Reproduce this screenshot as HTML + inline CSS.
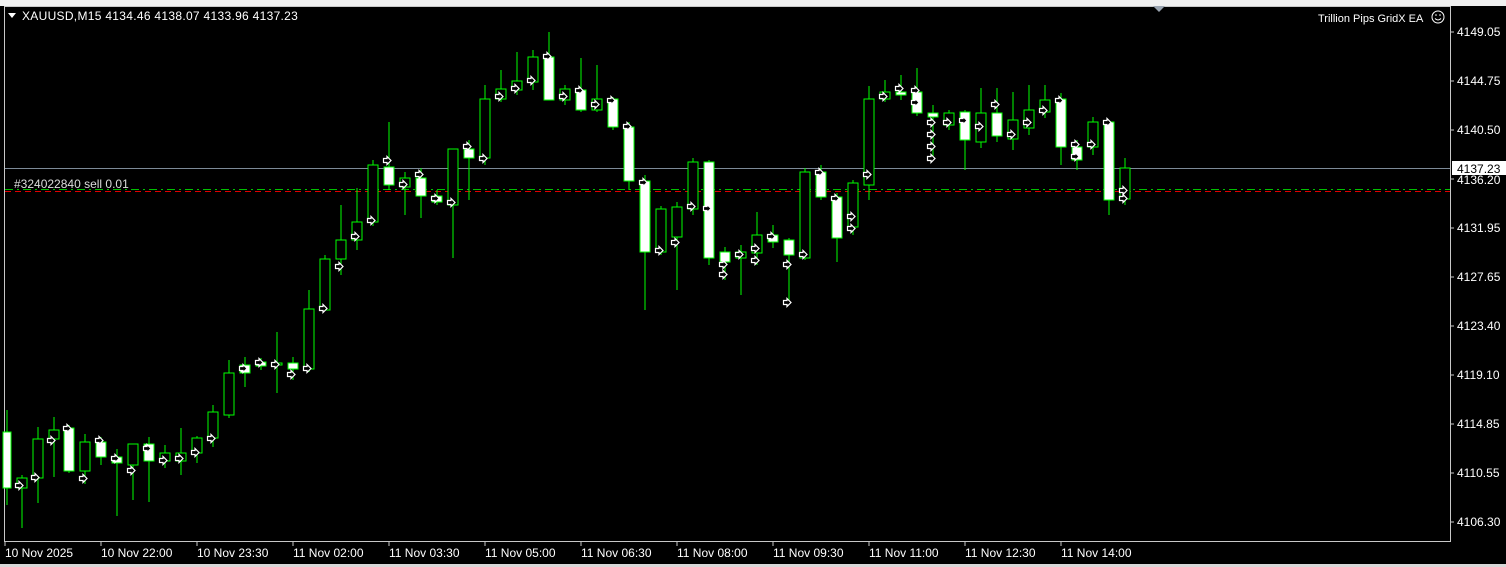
<!DOCTYPE html>
<html><head><meta charset="utf-8"><style>
html,body{margin:0;padding:0;background:#000;width:1506px;height:567px;overflow:hidden}
svg{display:block}
text{font-family:"Liberation Sans",sans-serif;font-size:12px}
</style></head><body>
<svg width="1506" height="567" xmlns="http://www.w3.org/2000/svg">
<defs>
<g id="ar"><path d="M0.5,2.5h3.5v-2l4,4-4,4v-2h-3.5z" fill="#000" stroke="#fff" stroke-width="1.2"/></g>
</defs>
<rect x="0" y="0" width="1506" height="6" fill="#f0f0f0"/>
<rect x="0" y="6" width="1506" height="561" fill="#000"/>
<rect x="4.5" y="6.5" width="1446" height="535" fill="none" stroke="#c8c8c8"/>
<polygon points="1153,6 1165,6 1159,12" fill="#9aa4b0"/>
<line x1="5" y1="168.5" x2="1450" y2="168.5" stroke="#7c8a98"/>
<line x1="5" y1="189.5" x2="1450" y2="189.5" stroke="#00c000" stroke-dasharray="8,4,2,4"/>
<line x1="5" y1="191.5" x2="1450" y2="191.5" stroke="#e00000" stroke-dasharray="6,4"/>
<g stroke="#00ff00" stroke-width="1" shape-rendering="crispEdges">
<line x1="7" y1="410" x2="7" y2="505"/><rect x="3" y="432" width="8" height="56" fill="#fff"/>
<line x1="22" y1="475" x2="22" y2="528"/><rect x="17" y="478" width="10" height="10" fill="#000"/>
<line x1="38" y1="427" x2="38" y2="503"/><rect x="33" y="439" width="10" height="39" fill="#000"/>
<line x1="54" y1="417" x2="54" y2="477"/><rect x="49" y="430" width="10" height="9" fill="#000"/>
<line x1="69" y1="425" x2="69" y2="473"/><rect x="64" y="428" width="10" height="43" fill="#fff"/>
<line x1="85" y1="434" x2="85" y2="484"/><rect x="80" y="442" width="10" height="29" fill="#000"/>
<line x1="101" y1="437" x2="101" y2="465"/><rect x="96" y="442" width="10" height="15" fill="#fff"/>
<line x1="117" y1="449" x2="117" y2="516"/><rect x="112" y="457" width="10" height="6" fill="#fff"/>
<line x1="133" y1="444" x2="133" y2="500"/><rect x="128" y="444" width="10" height="21" fill="#000"/>
<line x1="149" y1="437" x2="149" y2="502"/><rect x="144" y="444" width="10" height="17" fill="#fff"/>
<line x1="165" y1="445" x2="165" y2="468"/><rect x="160" y="453" width="10" height="8" fill="#000"/>
<line x1="181" y1="428" x2="181" y2="475"/><rect x="176" y="453" width="10" height="8" fill="#000"/>
<line x1="197" y1="436" x2="197" y2="463"/><rect x="192" y="438" width="10" height="15" fill="#000"/>
<line x1="213" y1="405" x2="213" y2="447"/><rect x="208" y="412" width="10" height="26" fill="#000"/>
<line x1="229" y1="360" x2="229" y2="418"/><rect x="224" y="373" width="10" height="42" fill="#000"/>
<line x1="245" y1="357" x2="245" y2="387"/><rect x="240" y="365" width="10" height="8" fill="#fff"/>
<line x1="261" y1="358" x2="261" y2="370"/><rect x="256" y="362" width="10" height="4" fill="#fff"/>
<line x1="277" y1="332" x2="277" y2="393"/><rect x="272" y="363" width="10" height="2" fill="#000"/>
<line x1="293" y1="357" x2="293" y2="380"/><rect x="288" y="363" width="10" height="6" fill="#fff"/>
<line x1="309" y1="290" x2="309" y2="372"/><rect x="304" y="309" width="10" height="60" fill="#000"/>
<line x1="325" y1="255" x2="325" y2="311"/><rect x="320" y="259" width="10" height="51" fill="#000"/>
<line x1="341" y1="205" x2="341" y2="275"/><rect x="336" y="240" width="10" height="19" fill="#000"/>
<line x1="357" y1="188" x2="357" y2="250"/><rect x="352" y="222" width="10" height="18" fill="#000"/>
<line x1="373" y1="160" x2="373" y2="226"/><rect x="368" y="165" width="10" height="57" fill="#000"/>
<line x1="389" y1="122" x2="389" y2="190"/><rect x="384" y="167" width="10" height="18" fill="#fff"/>
<line x1="405" y1="172" x2="405" y2="215"/><rect x="400" y="178" width="10" height="9" fill="#000"/>
<line x1="421" y1="168" x2="421" y2="218"/><rect x="416" y="178" width="10" height="18" fill="#fff"/>
<line x1="437" y1="190" x2="437" y2="205"/><rect x="432" y="196" width="10" height="6" fill="#fff"/>
<line x1="453" y1="149" x2="453" y2="258"/><rect x="448" y="149" width="10" height="56" fill="#000"/>
<line x1="469" y1="140" x2="469" y2="200"/><rect x="464" y="149" width="10" height="9" fill="#fff"/>
<line x1="485" y1="85" x2="485" y2="165"/><rect x="480" y="99" width="10" height="59" fill="#000"/>
<line x1="501" y1="70" x2="501" y2="102"/><rect x="496" y="89" width="10" height="10" fill="#000"/>
<line x1="517" y1="52" x2="517" y2="95"/><rect x="512" y="81" width="10" height="9" fill="#000"/>
<line x1="533" y1="50" x2="533" y2="90"/><rect x="528" y="57" width="10" height="25" fill="#000"/>
<line x1="549" y1="32" x2="549" y2="100"/><rect x="544" y="57" width="10" height="43" fill="#fff"/>
<line x1="565" y1="85" x2="565" y2="105"/><rect x="560" y="89" width="10" height="11" fill="#000"/>
<line x1="581" y1="58" x2="581" y2="112"/><rect x="576" y="90" width="10" height="20" fill="#fff"/>
<line x1="597" y1="65" x2="597" y2="112"/><rect x="592" y="99" width="10" height="11" fill="#000"/>
<line x1="613" y1="97" x2="613" y2="130"/><rect x="608" y="99" width="10" height="28" fill="#fff"/>
<line x1="629" y1="122" x2="629" y2="190"/><rect x="624" y="127" width="10" height="54" fill="#fff"/>
<line x1="645" y1="175" x2="645" y2="310"/><rect x="640" y="181" width="10" height="71" fill="#fff"/>
<line x1="661" y1="206" x2="661" y2="255"/><rect x="656" y="209" width="10" height="43" fill="#000"/>
<line x1="677" y1="202" x2="677" y2="290"/><rect x="672" y="207" width="10" height="30" fill="#000"/>
<line x1="693" y1="158" x2="693" y2="215"/><rect x="688" y="162" width="10" height="47" fill="#000"/>
<line x1="709" y1="160" x2="709" y2="265"/><rect x="704" y="162" width="10" height="96" fill="#fff"/>
<line x1="725" y1="247" x2="725" y2="280"/><rect x="720" y="252" width="10" height="10" fill="#fff"/>
<line x1="741" y1="245" x2="741" y2="295"/><rect x="736" y="252" width="10" height="6" fill="#000"/>
<line x1="757" y1="212" x2="757" y2="265"/><rect x="752" y="235" width="10" height="18" fill="#000"/>
<line x1="773" y1="225" x2="773" y2="248"/><rect x="768" y="235" width="10" height="7" fill="#fff"/>
<line x1="789" y1="238" x2="789" y2="300"/><rect x="784" y="240" width="10" height="15" fill="#fff"/>
<line x1="805" y1="168" x2="805" y2="260"/><rect x="800" y="172" width="10" height="86" fill="#000"/>
<line x1="821" y1="165" x2="821" y2="200"/><rect x="816" y="172" width="10" height="25" fill="#fff"/>
<line x1="837" y1="193" x2="837" y2="262"/><rect x="832" y="197" width="10" height="41" fill="#fff"/>
<line x1="853" y1="180" x2="853" y2="235"/><rect x="848" y="183" width="10" height="44" fill="#000"/>
<line x1="869" y1="86" x2="869" y2="200"/><rect x="864" y="99" width="10" height="86" fill="#000"/>
<line x1="885" y1="80" x2="885" y2="102"/><rect x="880" y="92" width="10" height="7" fill="#000"/>
<line x1="901" y1="75" x2="901" y2="100"/><rect x="896" y="92" width="10" height="3" fill="#fff"/>
<line x1="917" y1="68" x2="917" y2="116"/><rect x="912" y="92" width="10" height="21" fill="#fff"/>
<line x1="933" y1="105" x2="933" y2="160"/><rect x="928" y="113" width="10" height="4" fill="#fff"/>
<line x1="949" y1="110" x2="949" y2="130"/><rect x="944" y="113" width="10" height="12" fill="#000"/>
<line x1="965" y1="110" x2="965" y2="170"/><rect x="960" y="112" width="10" height="28" fill="#fff"/>
<line x1="981" y1="88" x2="981" y2="148"/><rect x="976" y="113" width="10" height="29" fill="#000"/>
<line x1="997" y1="88" x2="997" y2="142"/><rect x="992" y="113" width="10" height="23" fill="#fff"/>
<line x1="1013" y1="92" x2="1013" y2="150"/><rect x="1008" y="120" width="10" height="19" fill="#000"/>
<line x1="1029" y1="85" x2="1029" y2="135"/><rect x="1024" y="110" width="10" height="18" fill="#000"/>
<line x1="1045" y1="85" x2="1045" y2="118"/><rect x="1040" y="100" width="10" height="12" fill="#000"/>
<line x1="1061" y1="93" x2="1061" y2="165"/><rect x="1056" y="99" width="10" height="48" fill="#fff"/>
<line x1="1077" y1="140" x2="1077" y2="170"/><rect x="1072" y="147" width="10" height="13" fill="#fff"/>
<line x1="1093" y1="117" x2="1093" y2="155"/><rect x="1088" y="122" width="10" height="25" fill="#000"/>
<line x1="1109" y1="122" x2="1109" y2="215"/><rect x="1104" y="122" width="10" height="78" fill="#fff"/>
<line x1="1125" y1="158" x2="1125" y2="205"/><rect x="1120" y="168" width="10" height="31" fill="#000"/>
</g>
<g>
<use href="#ar" x="15" y="481"/><use href="#ar" x="31" y="473"/><use href="#ar" x="47" y="436"/><use href="#ar" x="63" y="424"/><use href="#ar" x="79" y="474"/><use href="#ar" x="95" y="436"/><use href="#ar" x="111" y="454"/><use href="#ar" x="127" y="466"/><use href="#ar" x="143" y="444"/><use href="#ar" x="159" y="456"/><use href="#ar" x="175" y="454"/><use href="#ar" x="191" y="448"/><use href="#ar" x="207" y="434"/><use href="#ar" x="239" y="364"/><use href="#ar" x="255" y="358"/><use href="#ar" x="271" y="360"/><use href="#ar" x="287" y="370"/><use href="#ar" x="303" y="364"/><use href="#ar" x="319" y="304"/><use href="#ar" x="335" y="262"/><use href="#ar" x="351" y="232"/><use href="#ar" x="367" y="216"/><use href="#ar" x="383" y="156"/><use href="#ar" x="399" y="180"/><use href="#ar" x="415" y="170"/><use href="#ar" x="431" y="194"/><use href="#ar" x="447" y="198"/><use href="#ar" x="463" y="142"/><use href="#ar" x="479" y="154"/><use href="#ar" x="495" y="92"/><use href="#ar" x="511" y="84"/><use href="#ar" x="527" y="76"/><use href="#ar" x="543" y="52"/><use href="#ar" x="559" y="92"/><use href="#ar" x="575" y="86"/><use href="#ar" x="591" y="100"/><use href="#ar" x="607" y="96"/><use href="#ar" x="623" y="122"/><use href="#ar" x="639" y="178"/><use href="#ar" x="655" y="246"/><use href="#ar" x="671" y="238"/><use href="#ar" x="687" y="202"/><use href="#ar" x="703" y="204"/><use href="#ar" x="719" y="260"/><use href="#ar" x="719" y="270"/><use href="#ar" x="735" y="250"/><use href="#ar" x="751" y="244"/><use href="#ar" x="751" y="256"/><use href="#ar" x="767" y="232"/><use href="#ar" x="783" y="260"/><use href="#ar" x="783" y="298"/><use href="#ar" x="799" y="250"/><use href="#ar" x="815" y="168"/><use href="#ar" x="831" y="194"/><use href="#ar" x="847" y="212"/><use href="#ar" x="847" y="224"/><use href="#ar" x="863" y="170"/><use href="#ar" x="879" y="92"/><use href="#ar" x="895" y="84"/><use href="#ar" x="911" y="86"/><use href="#ar" x="911" y="98"/><use href="#ar" x="927" y="118"/><use href="#ar" x="927" y="130"/><use href="#ar" x="927" y="142"/><use href="#ar" x="927" y="154"/><use href="#ar" x="943" y="118"/><use href="#ar" x="959" y="116"/><use href="#ar" x="975" y="122"/><use href="#ar" x="991" y="100"/><use href="#ar" x="1007" y="130"/><use href="#ar" x="1023" y="118"/><use href="#ar" x="1039" y="106"/><use href="#ar" x="1055" y="96"/><use href="#ar" x="1071" y="140"/><use href="#ar" x="1071" y="152"/><use href="#ar" x="1087" y="140"/><use href="#ar" x="1103" y="118"/><use href="#ar" x="1119" y="186"/><use href="#ar" x="1119" y="194"/>
</g>
<g style="fill:#fff">
<polygon points="8,13 16,13 12,18"/>
<text x="22" y="20" style="font-size:12px;letter-spacing:0.3px">XAUUSD,M15  4134.46 4138.07 4133.96 4137.23</text>
<text x="14" y="188" style="font-size:12px;fill:#ddd">#324022840 sell 0.01</text>
<text x="1318" y="22" style="font-size:11px">Trillion Pips GridX EA</text>
</g>
<circle cx="1438" cy="17" r="6" fill="none" stroke="#fff"/>
<circle cx="1436" cy="15" r="0.8" fill="#fff"/><circle cx="1440" cy="15" r="0.8" fill="#fff"/>
<path d="M1435,18.5 q3,3 6,0" fill="none" stroke="#fff"/>
<g stroke="#c8c8c8">
<line x1="1450" y1="32" x2="1454" y2="32"/><line x1="1450" y1="81" x2="1454" y2="81"/><line x1="1450" y1="130" x2="1454" y2="130"/><line x1="1450" y1="179" x2="1454" y2="179"/><line x1="1450" y1="228" x2="1454" y2="228"/><line x1="1450" y1="277" x2="1454" y2="277"/><line x1="1450" y1="326" x2="1454" y2="326"/><line x1="1450" y1="375" x2="1454" y2="375"/><line x1="1450" y1="424" x2="1454" y2="424"/><line x1="1450" y1="473" x2="1454" y2="473"/><line x1="1450" y1="522" x2="1454" y2="522"/>
</g>
<g style="fill:#fff;font-size:12px">
<text x="1457" y="36">4149.05</text><text x="1457" y="85">4144.75</text><text x="1457" y="134">4140.50</text><text x="1457" y="184">4136.20</text><text x="1457" y="232">4131.95</text><text x="1457" y="281">4127.65</text><text x="1457" y="330">4123.40</text><text x="1457" y="379">4119.10</text><text x="1457" y="428">4114.85</text><text x="1457" y="477">4110.55</text><text x="1457" y="526">4106.30</text>
</g>
<rect x="1452" y="161" width="54" height="14" fill="#fff"/>
<text x="1457" y="173" style="font-size:12px;fill:#000">4137.23</text>
<g stroke="#c8c8c8">
<line x1="5" y1="541" x2="5" y2="546"/><line x1="101" y1="541" x2="101" y2="546"/><line x1="197" y1="541" x2="197" y2="546"/><line x1="293" y1="541" x2="293" y2="546"/><line x1="389" y1="541" x2="389" y2="546"/><line x1="485" y1="541" x2="485" y2="546"/><line x1="581" y1="541" x2="581" y2="546"/><line x1="677" y1="541" x2="677" y2="546"/><line x1="773" y1="541" x2="773" y2="546"/><line x1="869" y1="541" x2="869" y2="546"/><line x1="965" y1="541" x2="965" y2="546"/><line x1="1061" y1="541" x2="1061" y2="546"/>
</g>
<g style="fill:#fff;font-size:12px">
<text x="5" y="557">10 Nov 2025</text><text x="101" y="557">10 Nov 22:00</text><text x="197" y="557">10 Nov 23:30</text><text x="293" y="557">11 Nov 02:00</text><text x="389" y="557">11 Nov 03:30</text><text x="485" y="557">11 Nov 05:00</text><text x="581" y="557">11 Nov 06:30</text><text x="677" y="557">11 Nov 08:00</text><text x="773" y="557">11 Nov 09:30</text><text x="869" y="557">11 Nov 11:00</text><text x="965" y="557">11 Nov 12:30</text><text x="1061" y="557">11 Nov 14:00</text>
</g>
<rect x="0" y="564" width="1506" height="3" fill="#d8d8d8"/>
</svg>
</body></html>
